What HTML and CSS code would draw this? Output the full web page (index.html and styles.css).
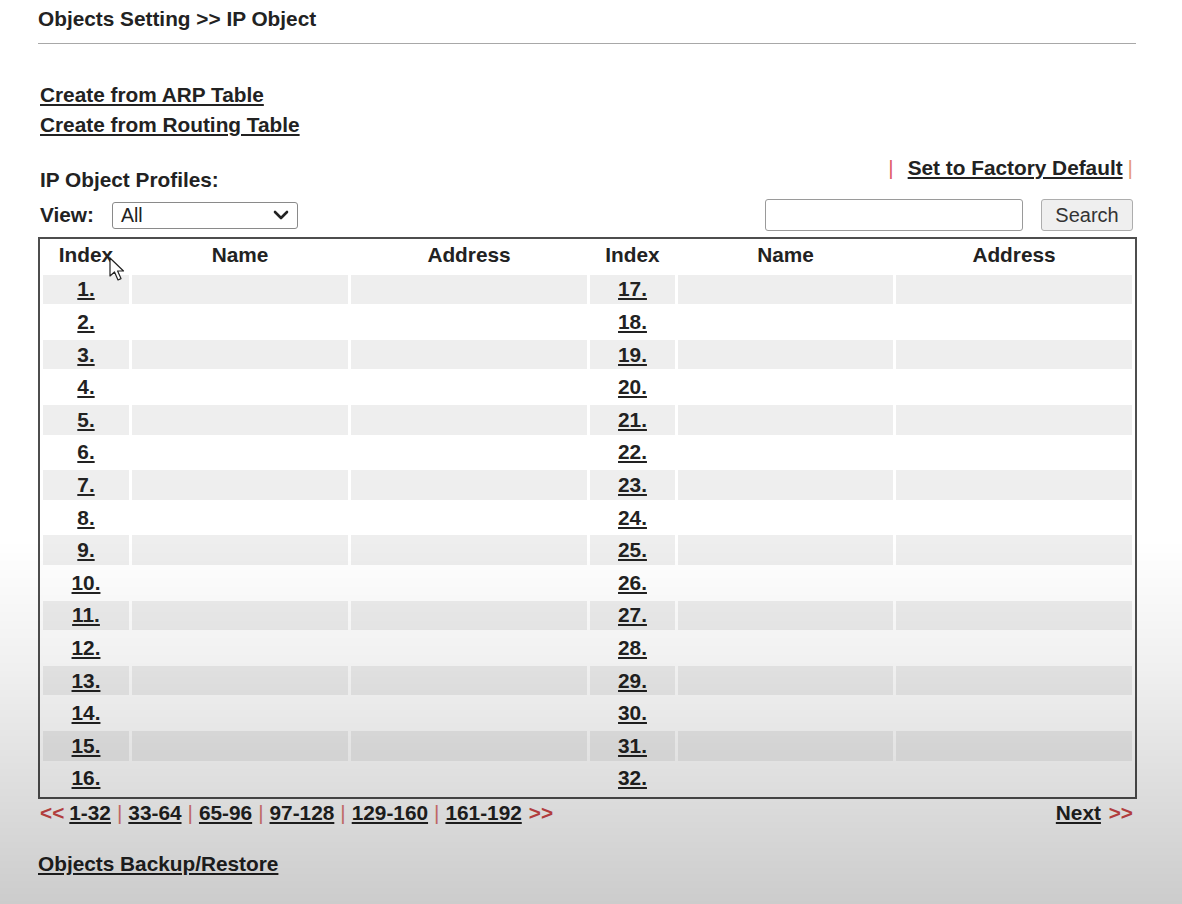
FILE: index.html
```html
<!DOCTYPE html>
<html>
<head>
<meta charset="utf-8">
<title>IP Object</title>
<link rel="stylesheet" href="styles.css">
</head>
<body>
<div class="page">
  <div class="title">Objects Setting &gt;&gt; IP Object</div>
  <div class="rule"></div>
  <div class="create">
    <a href="#" class="lnk">Create from ARP Table</a>
    <a href="#" class="lnk">Create from Routing Table</a>
  </div>
  <div class="profiles-row">
    <div class="profiles">IP Object Profiles:</div>
    <div class="factory"><span class="bar-red">|</span><a href="#" class="lnk">Set to Factory Default</a><span class="bar-orange">|</span></div>
  </div>
  <div class="view-row">
    <div class="view">
      <span class="view-label">View:</span>
      <div class="select"><span>All</span>
        <svg class="chev" width="16" height="10" viewBox="0 0 16 10"><path d="M2 2 L8 8 L14 2" fill="none" stroke="#222" stroke-width="2.6" stroke-linecap="round" stroke-linejoin="round"/></svg>
      </div>
    </div>
    <div class="search">
      <div class="search-input"></div>
      <div class="search-btn">Search</div>
    </div>
  </div>
  <table class="grid">
    <thead>
      <tr><th class="c-idx">Index</th><th class="c-name">Name</th><th class="c-addr">Address</th><th class="c-idx2">Index</th><th class="c-name2">Name</th><th class="c-addr">Address</th></tr>
    </thead>
    <tbody id="rows"></tbody>
  </table>
  <div class="pager">
    <div class="pages">
      <span class="arrow">&lt;&lt;</span>
      <a href="#" class="lnk">1-32</a><span class="sep">|</span>
      <a href="#" class="lnk">33-64</a><span class="sep">|</span>
      <a href="#" class="lnk">65-96</a><span class="sep">|</span>
      <a href="#" class="lnk">97-128</a><span class="sep">|</span>
      <a href="#" class="lnk">129-160</a><span class="sep">|</span>
      <a href="#" class="lnk">161-192</a>
      <span class="arrow">&gt;&gt;</span>
    </div>
    <div class="next"><a href="#" class="lnk">Next</a> <span class="arrow">&gt;&gt;</span></div>
  </div>
  <div class="backup"><a href="#" class="lnk">Objects Backup/Restore</a></div>
</div>
<svg class="cursor" width="18" height="26" viewBox="0 0 18 26"><path d="M1 1 L1 19 L5.5 15 L9 23 L12 21.6 L8.6 14 L14.5 14 Z" fill="#fff" stroke="#222" stroke-width="1.2" stroke-linejoin="round"/></svg>
<div class="shade"></div>
<script>
var tb = document.getElementById('rows');
var html = '';
for (var i = 1; i <= 16; i++) {
  html += '<tr class="' + (i % 2 ? 'odd' : 'even') + '"><td class="idx"><a href="#" class="lnk">' + i + '.</a></td><td></td><td></td><td class="idx"><a href="#" class="lnk">' + (i + 16) + '.</a></td><td></td><td></td></tr>';
}
tb.innerHTML = html;
</script>
</body>
</html>
```
FILE: styles.css
```css
html, body {
  margin: 0;
  padding: 0;
  background: #fff;
}
body {
  font-family: "Liberation Sans", Arial, sans-serif;
  font-size: 20.8px;
  color: #222;
  font-weight: bold;
  min-height: 904px;
}
.page {
  width: 1098px;
  margin-left: 38px;
}
.lnk {
  color: #222;
  text-decoration: underline;
  text-underline-offset: 2px;
}
.title {
  padding-top: 6px;
  line-height: 26px;
}
.rule {
  margin-top: 11px;
  height: 1px;
  background: #a8a8a8;
}
.create {
  margin-top: 36px;
  padding-left: 2px;
  display: flex;
  flex-direction: column;
  align-items: flex-start;
  line-height: 30px;
}
.profiles-row {
  display: flex;
  justify-content: space-between;
  align-items: flex-start;
  padding-left: 2px;
  padding-right: 3px;
}
.profiles {
  margin-top: 25px;
  line-height: 30px;
}
.factory {
  margin-top: 13px;
  line-height: 30px;
  display: flex;
  align-items: center;
}
.bar-red {
  color: #e05a6a;
  font-weight: normal;
  margin-right: 14px;
}
.bar-orange {
  color: #e89a78;
  font-weight: normal;
  margin-left: 5px;
}
.view-row {
  margin-top: 4px;
  display: flex;
  justify-content: space-between;
  align-items: center;
  padding-left: 2px;
  padding-right: 3px;
  height: 32px;
}
.view {
  display: flex;
  align-items: center;
}
.view-label {
  width: 72px;
}
.select {
  width: 186px;
  height: 27px;
  box-sizing: border-box;
  border: 1px solid #8a8a8a;
  border-radius: 3px;
  display: flex;
  align-items: center;
  justify-content: space-between;
  padding: 0 8px 0 8px;
  font-weight: normal;
  font-size: 19.5px;
  color: #222;
}
.search {
  display: flex;
  align-items: center;
  gap: 18px;
}
.search-input {
  width: 258px;
  height: 32px;
  box-sizing: border-box;
  border: 1px solid #9a9a9a;
  border-radius: 3px;
  background: #fff;
}
.search-btn {
  width: 92px;
  height: 32px;
  box-sizing: border-box;
  border: 1px solid #adadad;
  border-radius: 3px;
  background: #efefef;
  font-weight: normal;
  font-size: 20px;
  color: #333;
  display: flex;
  align-items: center;
  justify-content: center;
}
.grid {
  margin-top: 6px;
  width: 1099px;
  border: 2px solid #4e4e4e;
  border-collapse: separate;
  border-spacing: 3px;
  padding-bottom: 1px;
  table-layout: fixed;
}
.grid th, .grid td {
  height: 29.6px;
  padding: 0;
  text-align: center;
  line-height: 24px;
}
.grid th {
  padding-bottom: 3px;
  height: 26.6px;
}
.grid th.c-idx { width: 86px; }
.grid th.c-name { width: 216px; }
.grid th.c-addr { width: 236px; }
.grid th.c-idx2 { width: 85px; }
.grid th.c-name2 { width: 215px; }
.grid tr.odd td {
  background: #eeeeee;
}
.grid tr.even td {
  background: #fff;
}
.pager {
  display: flex;
  justify-content: space-between;
  align-items: center;
  padding-left: 2px;
  padding-right: 3px;
  line-height: 28px;
}
.pages {
  display: flex;
  align-items: center;
}
.pages .lnk {
  margin: 0 4px;
}
.arrow {
  color: #d04848;
  font-weight: bold;
}
.pages .arrow:first-child {
  margin-right: 1px;
}
.pages .arrow:last-child {
  margin-left: 3px;
}
.sep {
  color: #e07878;
  font-weight: normal;
  margin: 0 2px;
}
.next .arrow {
  margin-left: 2px;
}
.backup {
  margin-top: 23px;
  line-height: 28px;
}
.cursor {
  position: absolute;
  left: 109px;
  top: 257px;
}
.shade {
  position: fixed;
  left: 0;
  right: 0;
  top: 540px;
  bottom: 0;
  pointer-events: none;
  background: linear-gradient(to bottom, rgba(0,0,0,0) 0%, rgba(0,0,0,0.06) 35%, rgba(0,0,0,0.2) 100%);
}
```
